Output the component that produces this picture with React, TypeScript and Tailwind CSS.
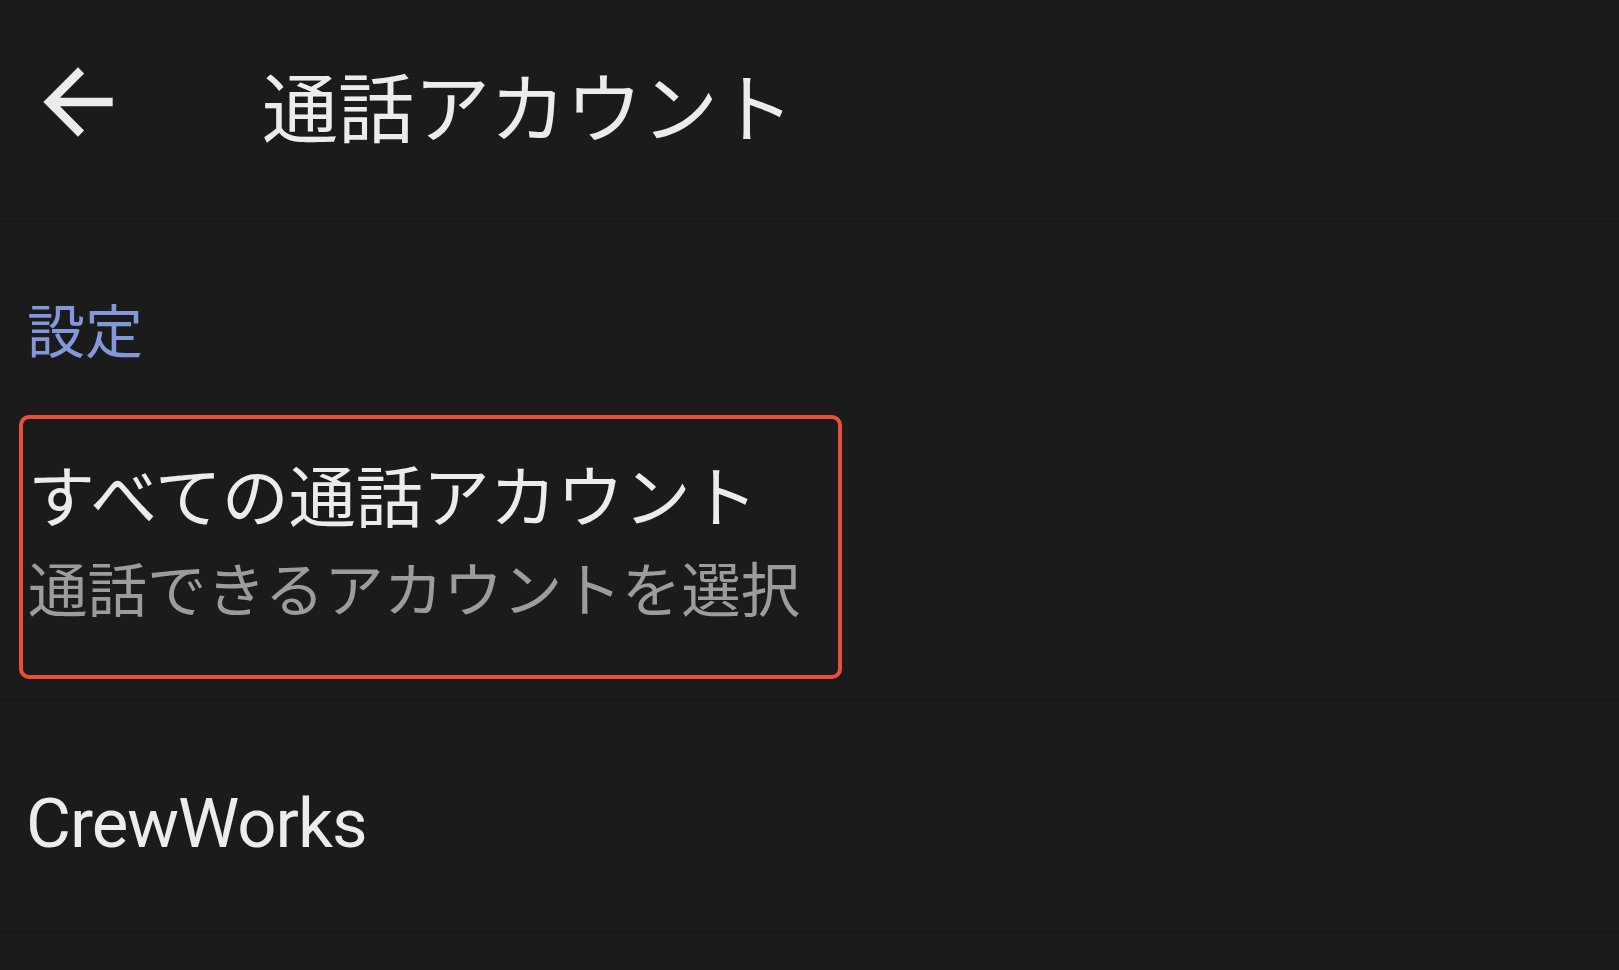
const jp = { fontFamily: '"Noto Sans CJK JP", "Noto Sans", sans-serif' };

function BackArrow() {
  return (
    <svg width="104" height="104" viewBox="0 0 24 24" fill="#ececec">
      <path d="M20 11H7.83l5.59-5.59L12 4l-8 8 8 8 1.41-1.41L7.83 13H20v-2z" />
    </svg>
  );
}

export default function App() {
  return (
    <div className="min-h-screen w-full bg-[#1b1b1b] text-[#ececec] overflow-hidden" style={jp}>
      {/* Toolbar */}
      <div className="h-[222px] border-b-2 border-[#181818] flex items-start pt-[50px]">
        <div className="flex items-center">
          <div className="ml-[26px] w-[104px] h-[104px] flex items-center justify-center">
            <BackArrow />
          </div>
          <h1 className="ml-[132px] text-[76px] leading-none font-normal mt-[4px]">通話アカウント</h1>
        </div>
      </div>

      {/* Category */}
      <div className="pt-[77px] pl-[27px]">
        <div className="text-[58px] leading-none text-[#8397da]">設定</div>
      </div>

      {/* Highlighted item */}
      <div className="pt-[58px] pb-[20px] border-b-2 border-[#181818]">
        <div className="ml-[19px] w-[823px] h-[264px] border-4 border-[#e8503a] rounded-[10px] pl-[5px] pt-[40px]">
          <div className="text-[67px] leading-none">すべての通話アカウント</div>
          <div className="mt-[31px] text-[59.5px] leading-none text-[#9c9c9c]">通話できるアカウントを選択</div>
        </div>
      </div>

      {/* Account row */}
      <div className="h-[232px] border-b-2 border-[#181818] flex items-center pl-[26px] pt-[14px]">
        <span
          className="text-[69px] leading-none text-[#ececec] tracking-[-1px]"
          style={{ fontFamily: 'Roboto, "Liberation Sans", sans-serif' }}
        >
          CrewWorks
        </span>
      </div>
    </div>
  );
}
